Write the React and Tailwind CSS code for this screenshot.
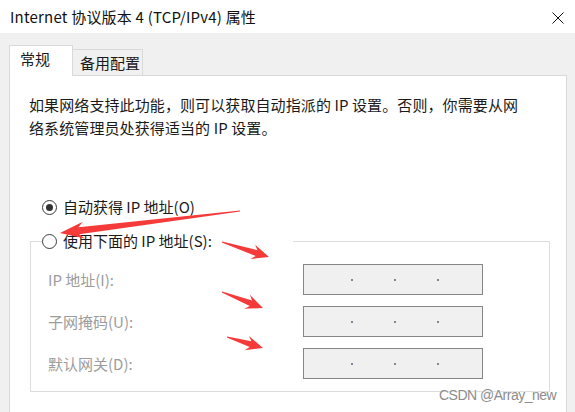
import React from 'react';

// tapered screenshot-style arrow, tail -> tip
const arrowPoints = (x1, y1, x2, y2, head = 17, back = 4, wing = 7.5, neck = 3) => {
  const dx = x2 - x1;
  const dy = y2 - y1;
  const len = Math.hypot(dx, dy);
  const ux = dx / len;
  const uy = dy / len;
  const nx = -uy;
  const ny = ux;
  const p = (a, b) => `${(x1 + ux * a + nx * b).toFixed(1)},${(y1 + uy * a + ny * b).toFixed(1)}`;
  return [
    p(0, -0.6),
    p(len - head + back, -neck),
    p(len - head, -wing),
    p(len, 0),
    p(len - head, wing),
    p(len - head + back, neck),
    p(0, 0.6),
  ].join(' ');
};

const arrows = [
  [240, 211, 60, 233, 24, 5, 8.5, 3.5],
  [222, 242, 269, 257],
  [222, 292, 263, 308],
  [227, 337, 263, 348],
];

const Radio = ({ checked }) => (
  <span className="w-[15px] h-[15px] rounded-full border border-[#3a3a3a] bg-white flex items-center justify-center shrink-0">
    {checked && <span className="w-[7px] h-[7px] rounded-full bg-[#333]" />}
  </span>
);

const IpBox = () => (
  <div className="w-[180px] h-[31px] border border-[#868686] bg-[#f0f0f0] flex items-center pl-[47px] gap-[41px]">
    <span className="w-[2px] h-[2px] bg-[#7d8796]" />
    <span className="w-[2px] h-[2px] bg-[#7d8796]" />
    <span className="w-[2px] h-[2px] bg-[#7d8796]" />
  </div>
);

const fields = ['IP 地址(I):', '子网掩码(U):', '默认网关(D):'];

export default function App() {
  return (
    <div className="w-[575px] h-[412px] bg-[#f0f0f0] overflow-hidden relative font-['Noto_Sans_CJK_SC',sans-serif] text-[15px] text-[#1a1a1a]">
      {/* Title bar */}
      <div className="h-[33px] bg-white flex items-center justify-between pl-[10px] pr-[11px]">
        <span className="leading-[20px] text-[#111] tracking-[0.2px]">Internet 协议版本 4 (TCP/IPv4) 属性</span>
        <svg width="12" height="12" viewBox="0 0 12 12" className="mt-[2px]">
          <path d="M0.5 0.5 L11.5 11.5 M11.5 0.5 L0.5 11.5" stroke="#111" strokeWidth="1" />
        </svg>
      </div>

      <div className="pt-[12px] pl-[9px] pr-[8px]">
        {/* Tabs */}
        <div className="flex items-end h-[30px]">
          <div className="w-[64px] h-[31px] bg-white border border-b-0 border-[#d9d9d9] relative z-10 -mb-px pl-[10px] pt-[3px] leading-[20px]">
            常规
          </div>
          <div className="w-[70px] h-[26px] border border-l-0 border-b-0 border-[#d9d9d9] pl-[7px] pt-[3px] leading-[20px]">
            备用配置
          </div>
        </div>

        {/* Panel */}
        <div className="h-[400px] bg-white border border-[#d9d9d9] pl-[20px] pr-[17px] pt-[17px]">
          <p className="leading-[23px] -ml-px tracking-[0.1px]">
            如果网络支持此功能，则可以获取自动指派的 IP 设置。否则，你需要从网
            <br />
            络系统管理员处获得适当的 IP 设置。
          </p>

          <div className="mt-[58px] ml-[12px] h-[20px] flex items-center gap-[6px] leading-[20px]">
            <Radio checked />
            <span>自动获得 IP 地址(O)</span>
          </div>

          <fieldset className="mt-[14px] w-[520px] border border-[#dcdcdc] pl-[17px] pb-[12px]">
            <legend className="ml-[-6px] w-[251px] h-[20px] flex items-center gap-[6px] leading-[20px]">
              <Radio />
              <span>使用下面的 IP 地址(S):</span>
            </legend>
            <div className="pt-[13px] flex flex-col gap-[11px]">
              {fields.map(label => (
                <div key={label} className="flex items-center">
                  <span className="w-[255px] text-[#9c9c9c] leading-[20px]">{label}</span>
                  <IpBox />
                </div>
              ))}
            </div>
          </fieldset>
        </div>
      </div>

      {/* Annotation arrows */}
      <svg className="absolute left-0 top-0 pointer-events-none" width="575" height="412">
        {arrows.map((a, i) => (
          <polygon key={i} points={arrowPoints(...a)} fill="#f53a3a" />
        ))}
      </svg>

      {/* Watermark */}
      <span className="absolute left-[439px] top-[385px] font-['Liberation_Sans',sans-serif] text-[14px] tracking-[-0.5px] leading-[20px] text-[#8c8c8c] [text-shadow:0_0_2px_#fff,0_0_2px_#fff]">
        CSDN @Array_new
      </span>
    </div>
  );
}
